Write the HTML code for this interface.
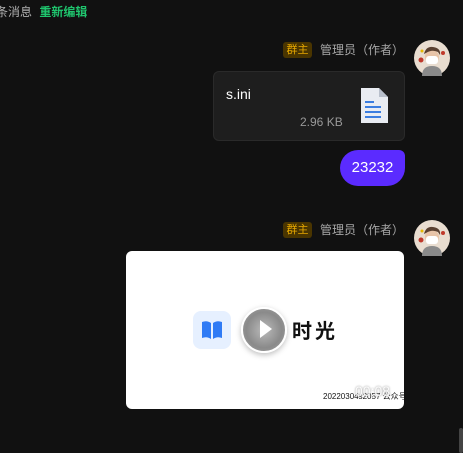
<!DOCTYPE html>
<html><head><meta charset="utf-8"><style>
*{margin:0;padding:0;box-sizing:border-box}
body{width:463px;height:453px;background:#111;overflow:hidden;position:relative;font-family:"Liberation Sans","Noto Sans CJK SC",sans-serif}
.a{position:absolute}
.badge{background:#4a3500;color:#e6a800;font-size:11px;line-height:16px;height:16px;width:29px;text-align:center;border-radius:3px}
.name{color:#a8a8a8;font-size:12px;line-height:16px}
</style></head><body>
<div class="a" style="left:-4px;top:4px;font-size:12px;line-height:16px;color:#b0b0b0">条消息 <span style="color:#1fc46d;font-weight:bold;margin-left:4px">重新编辑</span></div>

<div class="a badge" style="left:283px;top:42px">群主</div>
<div class="a name" style="left:320px;top:42px">管理员（作者）</div>
<svg class="a" style="left:414px;top:40px" width="36" height="36" viewBox="0 0 36 36">
<circle cx="18" cy="18" r="18" fill="#e9ddd0"/><path d="M8 36 Q8 26 18 26 Q28 26 28 36Z" fill="#8a8a8a"/>
<circle cx="18" cy="17" r="7" fill="#e8c4a8"/><path d="M10 14 Q12 6 19 7 Q27 8 26 15 L24 12 Q18 9 12 13Z" fill="#5a4030"/>
<rect x="12" y="16" width="12" height="8" rx="3" fill="#fff"/><circle cx="7" cy="20" r="2.5" fill="#c0392b"/><circle cx="29" cy="13" r="2" fill="#c0392b"/><circle cx="8" cy="11" r="1.5" fill="#e6b800"/></svg>

<div class="a" style="left:213px;top:71px;width:192px;height:70px;background:#1e1e1e;border:1px solid #2a2a2a;border-radius:6px"></div>
<div class="a" style="left:226px;top:86px;color:#fff;font-size:14px">s.ini</div>
<div class="a" style="left:300px;top:115px;color:#999;font-size:12px">2.96 KB</div>
<svg class="a" style="left:360px;top:87px" width="29" height="37" viewBox="0 0 29 37">
<path d="M1 1 H19 L28 10 V36 H1Z" fill="#e9ecf2"/><path d="M19 1 V10 H28Z" fill="#b9c0cc"/>
<rect x="5" y="14" width="9" height="2" fill="#3b7de0"/><rect x="5" y="19" width="16" height="2" fill="#3b7de0"/><rect x="5" y="24" width="16" height="2" fill="#3b7de0"/><rect x="5" y="29" width="16" height="2" fill="#3b7de0"/></svg>

<div class="a" style="left:340px;top:150px;width:65px;height:36px;background:#5b2bff;border-radius:18px 6px 18px 18px;color:#fff;font-size:15px;line-height:36px;text-align:center">23232</div>

<div class="a badge" style="left:283px;top:222px">群主</div>
<div class="a name" style="left:320px;top:222px">管理员（作者）</div>
<svg class="a" style="left:414px;top:220px" width="36" height="36" viewBox="0 0 36 36">
<circle cx="18" cy="18" r="18" fill="#e9ddd0"/><path d="M8 36 Q8 26 18 26 Q28 26 28 36Z" fill="#8a8a8a"/>
<circle cx="18" cy="17" r="7" fill="#e8c4a8"/><path d="M10 14 Q12 6 19 7 Q27 8 26 15 L24 12 Q18 9 12 13Z" fill="#5a4030"/>
<rect x="12" y="16" width="12" height="8" rx="3" fill="#fff"/><circle cx="7" cy="20" r="2.5" fill="#c0392b"/><circle cx="29" cy="13" r="2" fill="#c0392b"/><circle cx="8" cy="11" r="1.5" fill="#e6b800"/></svg>

<div class="a" style="left:126px;top:251px;width:278px;height:158px;background:#fff;border-radius:6px;overflow:hidden">
 <div class="a" style="left:67px;top:60px;width:38px;height:38px;background:#e6f0ff;border-radius:8px"></div>
 <svg class="a" style="left:75px;top:69px" width="22" height="20" viewBox="0 0 22 20"><path d="M1 2 Q6 0 10 3 V19 Q6 16 1 18Z M21 2 Q16 0 12 3 V19 Q16 16 21 18Z" fill="#2f7bf5"/></svg>
 <div class="a" style="left:115px;top:56px;width:46px;height:46px;border-radius:50%;background:radial-gradient(circle,#bbb 0,#8a8a8a 60%,#a5a5a5 100%);border:2px solid #fff;box-shadow:0 2px 6px rgba(0,0,0,.25)"></div>
 <svg class="a" style="left:133px;top:68px" width="14" height="20" viewBox="0 0 14 20"><path d="M1 1 L13 10 L1 19Z" fill="#fff"/></svg>
 <div class="a" style="left:166px;top:64px;font-size:20px;color:#111;font-weight:bold;letter-spacing:3px">时光</div>
 <div class="a" style="left:197px;top:140px;font-size:8px;color:#111;white-space:nowrap">20220304s2057 公众号</div>
 <div class="a" style="left:229px;top:132px;font-size:14px;color:rgba(255,255,255,.9);text-shadow:0 0 2px #888">00:08</div>
</div>
<div class="a" style="left:459px;top:428px;width:4px;height:25px;background:#444;border-radius:2px"></div>
</body></html>
